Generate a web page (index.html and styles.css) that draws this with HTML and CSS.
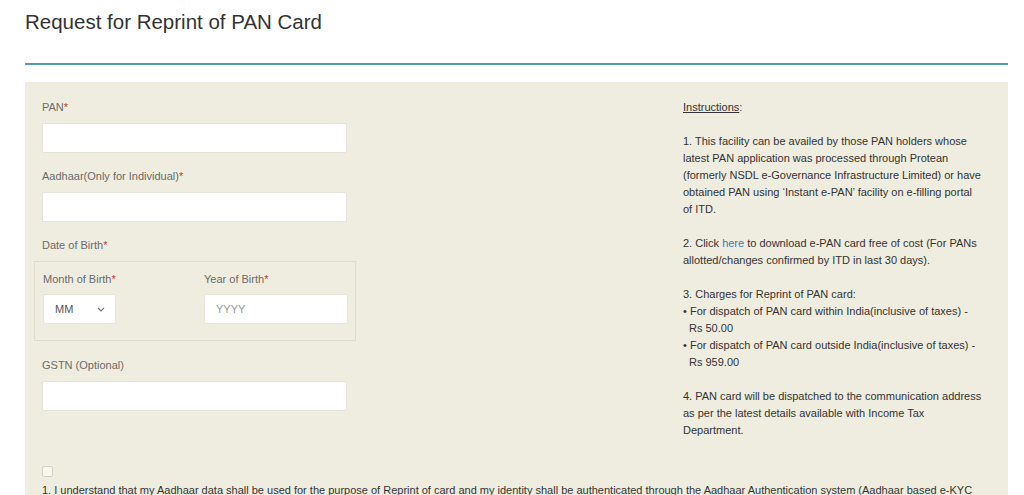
FILE: index.html
```html
<!DOCTYPE html>
<html lang="en">
<head>
<meta charset="utf-8">
<title>Request for Reprint of PAN Card</title>
<link rel="stylesheet" href="styles.css">
</head>
<body>
<div class="page">
  <header class="page-head">
    <h1 class="title">Request for Reprint of PAN Card</h1>
  </header>
  <section class="panel">
    <div class="grid">
      <form class="form-col">
        <div class="field">
          <label class="lbl">PAN<span class="req">*</span></label>
          <input class="ctl" type="text">
        </div>
        <div class="field">
          <label class="lbl">Aadhaar(Only for Individual)<span class="req">*</span></label>
          <input class="ctl" type="text">
        </div>
        <div class="field dob">
          <label class="lbl">Date of Birth<span class="req">*</span></label>
        </div>
        <div class="dob-box">
          <div class="dob-col">
            <label class="lbl">Month of Birth<span class="req">*</span></label>
            <div class="select-wrap">
              <select class="ctl sel"><option>MM</option></select>
              <svg class="chev" width="8" height="5" viewBox="0 0 8 5"><path d="M1 1l3 3 3-3" fill="none" stroke="#777" stroke-width="1.2"/></svg>
            </div>
          </div>
          <div class="dob-col">
            <label class="lbl">Year of Birth<span class="req">*</span></label>
            <input class="ctl" type="text" placeholder="YYYY">
          </div>
        </div>
        <div class="field">
          <label class="lbl">GSTN (Optional)</label>
          <input class="ctl" type="text">
        </div>
      </form>
      <div class="info-col">
        <p class="para"><u>Instructions</u>:</p>
        <p class="para">1. This facility can be availed by those PAN holders whose latest PAN application was processed through Protean (formerly NSDL e-Governance Infrastructure Limited) or have obtained PAN using ‘Instant e-PAN’ facility on e-filling portal of ITD.</p>
        <p class="para">2. Click <a class="link" href="#">here</a> to download e-PAN card free of cost (For PANs allotted/changes confirmed by ITD in last 30 days).</p>
        <div class="para">3. Charges for Reprint of PAN card:
          <ul class="bullets">
            <li>• For dispatch of PAN card within India(inclusive of taxes) - Rs 50.00</li>
            <li>• For dispatch of PAN card outside India(inclusive of taxes) - Rs 959.00</li>
          </ul>
        </div>
        <p class="para last">4. PAN card will be dispatched to the communication address as per the latest details available with Income Tax Department.</p>
      </div>
    </div>
    <div class="consent">
      <input class="chk" type="checkbox">
      <p class="consent-text">1. I understand that my Aadhaar data shall be used for the purpose of Reprint of card and my identity shall be authenticated through the Aadhaar Authentication system (Aadhaar based e-KYC services of UIDAI) in accordance with the provisions of the Aadhaar Act.</p>
    </div>
  </section>
</div>
</body>
</html>
```

FILE: styles.css
```css
html, body {
  margin: 0;
  padding: 0;
  background: #ffffff;
}
body {
  font-family: "Liberation Sans", Arial, sans-serif;
  color: #333;
  font-size: 11px;
  line-height: 17px;
}
.page {
  padding: 0 16px 0 25px;
}
.page-head {
  padding: 10px 0 29px;
  border-bottom: 2px solid #4f9caa;
}
.title {
  margin: 0;
  font-size: 20.5px;
  line-height: 24px;
  font-weight: normal;
  color: #333;
}
.panel {
  margin-top: 17px;
  background: #efeddf;
  padding: 17px 25px 0 9px;
  height: 420px;
}
.grid {
  display: grid;
  grid-template-columns: 322px 300px;
  column-gap: 327px;
}
.form-col {
  margin: 0;
}
.field {
  display: flex;
  flex-direction: column;
  margin: 0 9px 15px 8px;
}
.field.dob {
  margin-bottom: 0;
}
.lbl {
  display: block;
  color: #6b6b6b;
  line-height: 17px;
  margin-bottom: 7px;
}
.req {
  color: #c0392b;
}
.ctl {
  box-sizing: border-box;
  height: 30px;
  width: 305px;
  border: 1px solid #e6e4d8;
  border-radius: 2px;
  background: #fff;
  font-family: inherit;
  font-size: 11px;
  color: #555;
  padding: 0 11px;
  margin: 0;
  outline: none;
}
.ctl::placeholder {
  color: #9a9a9a;
}
.dob-box {
  border: 1px solid #e0ddcc;
  padding: 9px 8px 16px;
  margin-bottom: 16px;
  display: grid;
  grid-template-columns: 144px 144px;
  column-gap: 17px;
}
.dob-col .lbl {
  margin-bottom: 6px;
}
.dob-col .ctl {
  width: 144px;
}
.select-wrap {
  position: relative;
  width: 73px;
}
.ctl.sel {
  width: 73px;
  appearance: none;
  -webkit-appearance: none;
  color: #555;
}
.chev {
  position: absolute;
  left: 54px;
  top: 13px;
  pointer-events: none;
}
.info-col {
  color: #333;
}
.para {
  margin: 0 0 17px;
}
.para.last {
  margin-bottom: 0;
}
.link {
  color: #2d7fc6;
  text-decoration: none;
}
.bullets {
  list-style: none;
  margin: 0;
  padding: 0;
}
.bullets li {
  padding-left: 6px;
  text-indent: -6px;
}
.consent {
  margin: 27px 0 0 8px;
}
.chk {
  appearance: none;
  -webkit-appearance: none;
  display: block;
  width: 11px;
  height: 11px;
  margin: 0;
  border: 1px solid #d3d1c5;
  border-radius: 2px;
  background: #f7f6ef;
}
.consent-text {
  margin: 5px 0 0;
  color: #333;
}
```
